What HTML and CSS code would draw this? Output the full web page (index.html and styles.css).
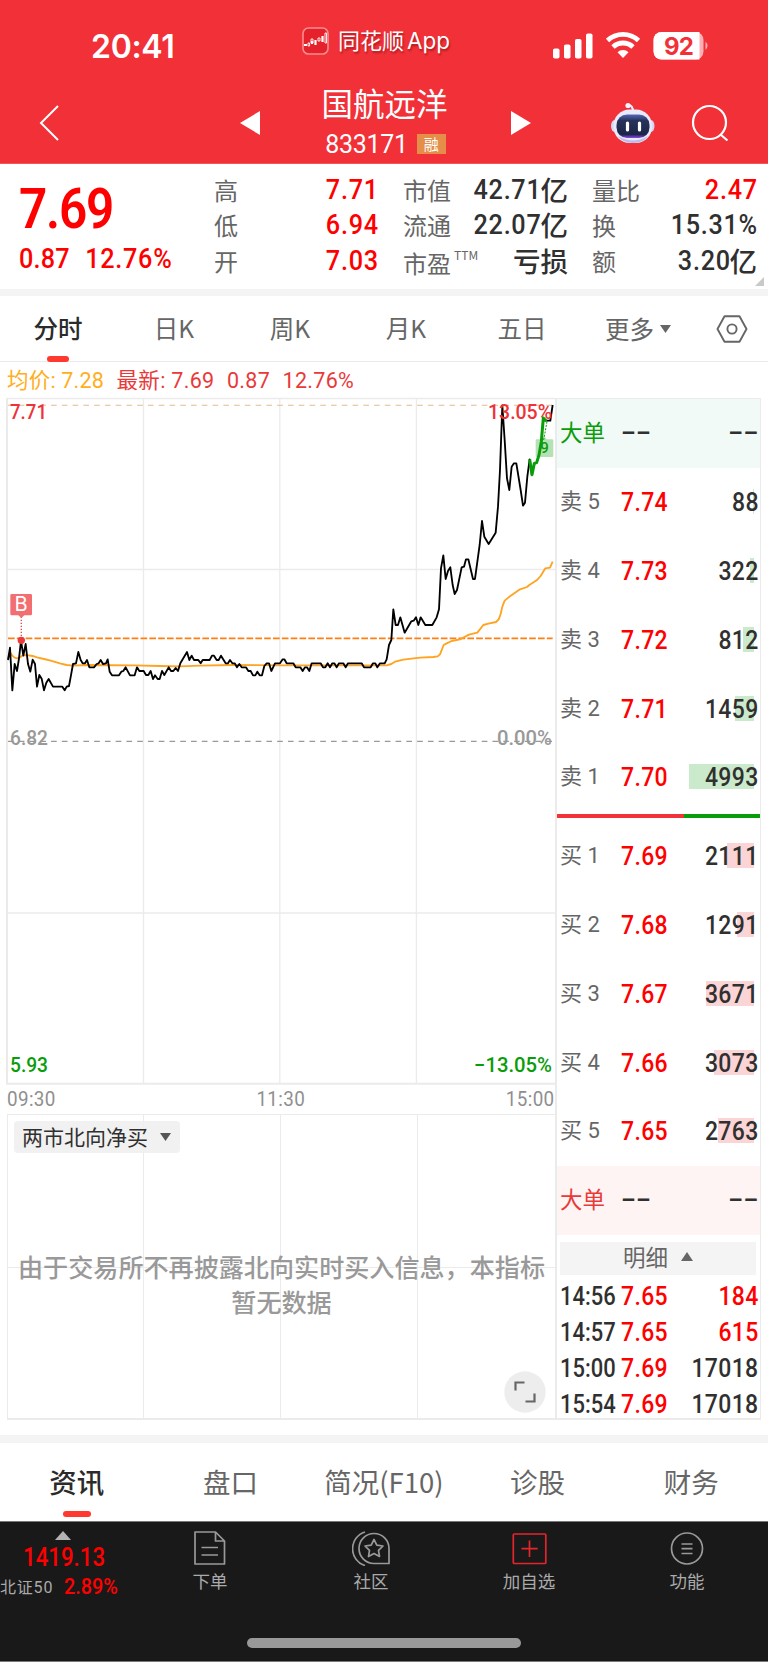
FILE: index.html
```html
<!DOCTYPE html>
<html lang="zh-CN">
<head>
<meta charset="utf-8">
<title>国航远洋 833171</title>
<link rel="stylesheet" href="styles.css">
</head>
<body>
<header class="header">
  <div class="status">
    <span class="clock">20:41</span>
    <div class="app">
      <svg width="27" height="28" viewBox="0 0 27 28"><rect x="1" y="1" width="25" height="26" rx="5.5" fill="#e5222b" stroke="#f78d90" stroke-width="1.6"/><path d="M2 18h3M10 14v3M13.5 13v5M20.5 9v6" stroke="#fff" stroke-width="2.2"/><path d="M6 17v2h1.600v-3H6zM9 12h2v4H9zM16 11h2v3h-2zM23 6h1.500v10H23z" fill="none" stroke="#fff" stroke-width=".9"/></svg>
      <span>同花顺<i>App</i></span>
    </div>
    <svg class="signals" width="158" height="30" viewBox="552 31 158 30">
      <g fill="#fff"><rect x="553" y="48.500" width="6.500" height="10" rx="1.800"/><rect x="564" y="44.500" width="6.500" height="14" rx="1.800"/><rect x="575" y="39" width="6.500" height="19.500" rx="1.800"/><rect x="586" y="33.500" width="6.500" height="25" rx="1.800"/></g>
      <g fill="none" stroke="#fff" stroke-width="4.800"><path d="M607.500 40.500a22.500 22.500 0 0 1 31 0"/><path d="M613 47a14.500 14.500 0 0 1 20 0"/></g><path d="M617.500 52.300a8 8 0 0 1 11 0L623 58z" fill="#fff"/>
      <rect x="653.500" y="32" width="50" height="27.500" rx="8" fill="#fbb0b3"/><path d="M661.500 32H699.500V59.500H661.500a8 8 0 0 1-8-8V40a8 8 0 0 1 8-8" fill="#fff"/><path d="M705.500 41.500q4 4.200 0 8.500z" fill="#fbb0b3"/>
      <text class="battery" x="678.500" y="54.500" text-anchor="middle">92</text>
    </svg>
  </div>
  <div class="nav">
    <svg class="back" width="22" height="38" viewBox="0 0 22 38"><path d="M20 2L3 19 20 36" fill="none" stroke="#fff" stroke-width="2"/></svg>
    <svg class="prev" width="20" height="24" viewBox="0 0 20 24"><path d="M20 0v24L0 12z" fill="#fff"/></svg>
    <div class="title"><h1>国航远洋</h1><p><span>833171</span><b>融</b></p></div>
    <svg class="next" width="20" height="24" viewBox="0 0 20 24"><path d="M0 0v24L20 12z" fill="#fff"/></svg>
    <svg class="robot" width="46" height="42" viewBox="610 102 46 42">
      <defs><linearGradient id="face" x1="0" y1="0" x2="0" y2="1"><stop offset="0" stop-color="#5668b8"/><stop offset=".25" stop-color="#28335c"/><stop offset=".85" stop-color="#1b2547"/><stop offset="1" stop-color="#9046f0"/></linearGradient></defs>
      <path d="M628 105q5 0 5 7" fill="none" stroke="#e8eafa" stroke-width="2.200"/><circle cx="628" cy="105.500" r="2.600" fill="#f3f4ff"/>
      <ellipse cx="614.500" cy="126" rx="3.500" ry="6" fill="#d5d7f4"/><ellipse cx="651" cy="126" rx="3.500" ry="6" fill="#d5d7f4"/>
      <rect x="613.500" y="109.500" width="38.500" height="33.500" rx="16" fill="#e9eafb"/><path d="M618 136q15 9 30 0-5 7-15 7t-15-7" fill="#b9bce9"/>
      <rect x="616.500" y="114.500" width="33" height="23.500" rx="10.500" fill="url(#face)"/><path d="M627.500 123v7M639.500 123v7" stroke="#fff" stroke-width="3.200" stroke-linecap="round"/>
    </svg>
    <svg class="search" width="40" height="40" viewBox="690 104 40 40"><ellipse cx="709.500" cy="123.500" rx="16.500" ry="16.500" fill="none" stroke="#fff" stroke-width="2.200"/><path d="M720.500 135.500L727.500 141.500" stroke="#fff" stroke-width="2.200"/></svg>
  </div>
</header>

<section class="quote">
  <div class="last"><strong class="n">7.69</strong><p class="n"><span>0.87</span><span class="pct">12.76%</span></p></div>
  <dl class="stats s1"><dt>高</dt><dd class="up"><span class="n">7.71</span></dd><dt>低</dt><dd class="up"><span class="n">6.94</span></dd><dt>开</dt><dd class="up"><span class="n">7.03</span></dd></dl>
  <dl class="stats s2"><dt>市值</dt><dd><span class="n">42.71</span><em>亿</em></dd><dt>流通</dt><dd><span class="n">22.07</span><em>亿</em></dd><dt class="pe">市盈<sup>TTM</sup></dt><dd><em>亏损</em></dd></dl>
  <dl class="stats s3"><dt>量比</dt><dd class="up"><span class="n">2.47</span></dd><dt>换</dt><dd><span class="n">15.31%</span></dd><dt>额</dt><dd><span class="n">3.20</span><em>亿</em></dd></dl>
  <svg class="corner" width="9" height="9" viewBox="0 0 9 9"><path d="M9 0v9H0z" fill="#c9c9c9"/></svg>
</section>

<nav class="periods">
  <span class="active">分时</span><span>日K</span><span>周K</span><span>月K</span><span>五日</span>
  <span class="more">更多<svg width="11" height="8" viewBox="0 0 11 8"><path d="M0 0h11L5.500 8z" fill="#666"/></svg></span>
  <span class="gear"><svg width="32" height="28" viewBox="0 0 32 28"><path d="M8.500 1.300h15L30.500 14l-7 12.700h-15L1.500 14z" fill="none" stroke="#666" stroke-width="1.900" stroke-linejoin="round"/><circle cx="16" cy="14" r="4.600" fill="none" stroke="#666" stroke-width="1.900"/></svg></span>
</nav>

<p class="legend"><span class="avg">均价: 7.28</span><span>最新: 7.69</span><span>0.87</span><span>12.76%</span></p>

<main class="board">
  <div class="charts">
    <svg class="trend" width="550" height="688" viewBox="6 397 550 688">
      <g fill="none" stroke="#ebebeb"><path d="M6 398.500H555M143.500 398V1084M279.800 398V1084M416.400 398V1084M7 569.500H555M7 913H555" stroke-width="1.300"/><path d="M7 398V1084M6 1083.700H555" stroke-width="2"/></g>
      <g transform="translate(0 390) scale(.33333)">
        <path d="M24 46H1662" stroke="#dfbd90" stroke-width="3.200" stroke-dasharray="17 15.300"/>
        <path d="M24 1054H1662" stroke="#999" stroke-width="3.600" stroke-dasharray="17 15.300"/>
        <path d="M24 745H1658" stroke="#ff7f11" stroke-width="4.800" stroke-dasharray="20 6.500"/>
        <path d="M64 680V745" stroke="#e84545" stroke-width="4" stroke-dasharray="4 5"/>
        <polyline fill="none" stroke="#ffa321" stroke-width="5.500" stroke-linejoin="round" points="24,808 30,787 37,797 44,803 51,805 58,803 70,795 85,796 98,798 111,802 132,807 152,812 180,820 200,825 220,827 260,825 400,826 480,828 540,829 600,827 700,825 840,826 1160,826 1174,822 1185,815 1210,809 1260,803 1300,801 1313,799 1320,793 1331,765 1340,760 1355,753 1380,748 1407,734 1432,728 1450,705 1465,701 1488,696 1496,688 1502,672 1507,650 1514,632 1526,622 1560,598 1581,591 1588,585 1610,571 1622,558 1636,535 1650,533 1658,515"/>
        <polyline fill="none" stroke="#000" stroke-width="5.500" stroke-linejoin="round" points="24,810 30,773 37,901 44,822 51,843 57,805 63,752 70,797 77,762 84,822 91,845 98,809 105,822 111,890 118,855 125,866 132,901 139,878 146,867 159,890 187,890 194,901 200,890 207,888 214,850 219,822 228,820 235,786 242,810 248,820 255,820 261,810 268,832 282,832 290,822 296,820 302,810 309,822 318,820 323,808 329,845 336,856 357,856 364,845 370,843 377,832 390,856 404,856 411,832 418,843 431,843 438,855 445,855 452,843 459,867 465,856 473,867 479,867 486,843 493,855 506,832 513,843 520,843 527,834 534,843 541,820 561,786 568,810 575,797 582,810 595,810 602,820 608,810 629,810 636,797 642,797 650,810 656,810 663,797 677,820 684,820 690,810 697,820 704,820 711,832 718,822 725,832 738,832 745,843 752,843 759,856 766,856 772,845 779,856 786,856 793,828 800,820 807,820 814,843 825,820 840,820 848,808 853,808 860,820 880,820 887,832 901,832 908,843 915,832 921,832 928,843 935,820 962,820 969,832 976,832 983,820 990,832 997,820 1003,820 1010,832 1017,820 1030,820 1037,832 1044,820 1085,820 1092,832 1112,832 1119,820 1126,820 1132,832 1140,820 1154,820 1160,808 1167,765 1174,750 1180,658 1187,705 1194,705 1201,682 1214,728 1234,694 1241,692 1248,682 1255,705 1262,682 1276,705 1297,705 1310,682 1317,658 1323,535 1330,496 1337,567 1344,543 1351,532 1358,585 1364,612 1371,600 1385,532 1392,530 1398,508 1405,508 1419,567 1425,567 1439,465 1446,393 1453,440 1466,462 1487,428 1494,350 1500,240 1507,46 1514,150 1521,265 1528,300 1535,230 1542,220 1549,220 1562,300 1569,347 1575,338 1582,260 1589,208 1596,256"/>
        <path d="M1637 92H1651L1658 45" fill="none" stroke="#000" stroke-width="5.500"/>
        <circle cx="64" cy="751" r="11" fill="#e83b3b"/>
        <path d="M35 612H92q4 0 4 4V672q0 4-4 4H73l-9 8-9-8H35q-4 0-4-4V616q0-4 4-4" fill="#f26e70"/>
        <path d="M1641 95L1631 150" stroke="#0a9d0a" stroke-width="3" stroke-dasharray="6 4"/>
        <path d="M1611 148H1624l8-10 8 10H1656q4 0 4 4V197q0 4-4 4H1611q-4 0-4-4V152q0-4 4-4" fill="#0a9d0a" fill-opacity=".3"/>
      </g>
      <text class="mark-b" x="21" y="610.500" text-anchor="middle">B</text>
      <text class="mark-9" x="544.500" y="453" text-anchor="middle">9</text>
      <text class="c-up" x="10" y="418.500" textLength="37" lengthAdjust="spacingAndGlyphs">7.71</text>
      <text class="c-up" x="488" y="418.500" textLength="64" lengthAdjust="spacingAndGlyphs">13.05%</text>
      <text class="c-flat" x="10" y="745" textLength="38" lengthAdjust="spacingAndGlyphs">6.82</text>
      <text class="c-flat" x="497" y="745" textLength="55" lengthAdjust="spacingAndGlyphs">0.00%</text>
      <text class="c-down" x="10" y="1072" textLength="38" lengthAdjust="spacingAndGlyphs">5.93</text>
      <text class="c-down" x="474" y="1072" textLength="78" lengthAdjust="spacingAndGlyphs">−13.05%</text>
      <polyline transform="translate(0 390) scale(.33333)" fill="none" stroke="#0a9d0a" stroke-width="9" stroke-linejoin="round" points="1589,208 1596,254 1603,220 1610,218 1617,195 1624,155 1630,84 1639,94"/>
    </svg>
    <div class="times"><span>09:30</span><span>11:30</span><span>15:00</span></div>
    <div class="north">
      <span class="picker">两市北向净买<svg width="11" height="8" viewBox="0 0 11 8"><path d="M0 0h11L5.500 8z" fill="#555"/></svg></span>
      <p>由于交易所不再披露北向实时买入信息，本指标<br>暂无数据</p>
      <svg class="expand" width="42" height="42" viewBox="0 0 42 42"><circle cx="21" cy="21" r="20.700" fill="#ededed"/><path d="M11.500 19.500V11.500H20.500M30.500 22.500V30.500H21.500" fill="none" stroke="#666" stroke-width="2.200"/></svg>
    </div>
  </div>

  <aside class="book">
    <div class="row big sell"><label>大单</label><b>––</b><i><s>––</s></i></div>
    <div class="row"><label>卖 5</label><b>7.74</b><i><u style="width:1px"></u><s>88</s></i></div>
    <div class="row"><label>卖 4</label><b>7.73</b><i><u style="width:4px"></u><s>322</s></i></div>
    <div class="row"><label>卖 3</label><b>7.72</b><i><u style="width:11px"></u><s>812</s></i></div>
    <div class="row"><label>卖 2</label><b>7.71</b><i><u style="width:19px"></u><s>1459</s></i></div>
    <div class="row"><label>卖 1</label><b>7.70</b><i><u style="width:65px"></u><s>4993</s></i></div>
    <div class="ratio"></div>
    <div class="row buy"><label>买 1</label><b>7.69</b><i><u style="width:27px"></u><s>2111</s></i></div>
    <div class="row buy"><label>买 2</label><b>7.68</b><i><u style="width:17px"></u><s>1291</s></i></div>
    <div class="row buy"><label>买 3</label><b>7.67</b><i><u style="width:48px"></u><s>3671</s></i></div>
    <div class="row buy"><label>买 4</label><b>7.66</b><i><u style="width:40px"></u><s>3073</s></i></div>
    <div class="row buy"><label>买 5</label><b>7.65</b><i><u style="width:36px"></u><s>2763</s></i></div>
    <div class="row big bid"><label>大单</label><b>––</b><i><s>––</s></i></div>
    <div class="detail">明细<svg width="12" height="9" viewBox="0 0 12 9"><path d="M0 9h12L6 0z" fill="#666"/></svg></div>
    <div class="tick"><span>14:56</span><b>7.65</b><i class="up"><s>184</s></i></div>
    <div class="tick"><span>14:57</span><b>7.65</b><i class="up"><s>615</s></i></div>
    <div class="tick"><span>15:00</span><b>7.69</b><i><s>17018</s></i></div>
    <div class="tick"><span>15:54</span><b>7.69</b><i><s>17018</s></i></div>
  </aside>
</main>

<nav class="sections"><span class="active">资讯</span><span>盘口</span><span>简况(F10)</span><span>诊股</span><span>财务</span></nav>

<footer class="footer">
  <div class="bar">
    <div class="index"><svg width="16" height="9" viewBox="0 0 16 9"><path d="M0 9h16L8 0z" fill="#b3b3b3"/></svg><strong>1419.13</strong><p><span>北证50</span><b>2.89%</b></p></div>
    <div class="item i1"><svg width="36" height="36" viewBox="192 1530 36 36" fill="none" stroke="#999" stroke-width="1.700" stroke-linejoin="round"><path d="M195 1532H215.500L224.500 1541V1564H195zM215.500 1532V1541H224.500M201.500 1547.500H218M201.500 1555H218"/></svg>下单</div>
    <div class="item i2"><svg width="38" height="36" viewBox="351 1530 38 36" fill="none" stroke="#999" stroke-width="1.700" stroke-linejoin="round"><path d="M373 1563.500a15 15 0 1 1 15-15V1563.500zM364 1532a17.500 17.500 0 0 0 0 33.500"/><path d="M373 1539.500l2.800 5.600 6.200.9-4.500 4.400 1 6.100-5.500-2.900-5.500 2.900 1-6.100-4.500-4.400 6.200-.9z"/></svg>社区</div>
    <div class="item i3"><svg width="36" height="36" viewBox="512 1530 36 36" fill="none" stroke="#e3262d" stroke-width="1.700"><rect x="514.300" y="1534" width="32.500" height="29.500" rx="1"/><path d="M530.500 1540.500V1557M522.500 1548.700H538.700"/></svg>加自选</div>
    <div class="item i4"><svg width="36" height="36" viewBox="669.500 1530 36 36" fill="none" stroke="#999" stroke-width="1.700"><circle cx="687.500" cy="1548.500" r="15.500"/><path d="M682 1544H693M682 1548.700H693M682 1553.500H693"/></svg>功能</div>
  </div>
  <div class="home"></div>
</footer>
</body>
</html>
```

FILE: styles.css
```css
* { box-sizing: border-box; }
body, h1, p, dl, dd { margin: 0; }
body { width: 768px; background: #fff; color: #303030; font-family: Roboto, "Noto Sans CJK SC", sans-serif; }
i, em { font-style: normal; }
svg { display: block; flex: none; }
svg text { white-space: pre; }
.up { color: #f00; }
/* narrow numerals */
.n { display: inline-block; transform: scaleX(.9); transform-origin: right center; letter-spacing: .8px; margin-right: -.8px; }

.header { height: 164px; background: #f23038; color: #fff; border-bottom: 1px solid #f4565b; }
.status { display: flex; height: 84px; }
.clock { width: 211px; padding: 28px 0 0 91px; font: 600 32px/38px Inter, sans-serif; letter-spacing: -.3px; }
.app { display: flex; gap: 9px; width: 250px; padding: 27px 0 0 91px; font-size: 22px; line-height: 28px; text-shadow: 1px 2px 2px rgba(90, 0, 0, .45); white-space: nowrap; }
.app i { margin-left: 3px; font-family: Inter, sans-serif; font-size: 22.500px; }
.signals { margin: 31px 0 0 91px; }
.battery { font: 700 24px Inter, sans-serif; fill: #f23038; letter-spacing: -.8px; }
.nav { display: flex; height: 79px; }
.back { margin: 20px 0 0 38px; }
.prev { margin: 27px 0 0 180px; }
.title { width: 251px; padding-right: 2px; text-align: center; }
.title h1 { height: 42px; font: 400 31.500px/37px "Noto Sans CJK SC", sans-serif; }
.title p { display: flex; justify-content: center; align-items: center; gap: 9px; height: 36px; padding-left: 2px; font-size: 25px; letter-spacing: -.3px; }
.title b { width: 29px; height: 20px; background: #e58e49; font: 400 15px/19px "Noto Sans CJK SC", sans-serif; letter-spacing: 0; }
.next { margin: 27px 0 0; }
.robot { margin: 18px 0 0 79px; }
.search { margin: 19px 0 0 34px; }

.quote { position: relative; display: flex; height: 132px; padding-top: 9px; border-bottom: 7px solid #f4f4f4; }
.last { width: 214px; padding-left: 18px; color: #f00; font-weight: 500; }
.last .n { transform-origin: left center; }
.last strong { display: block; height: 68px; padding-left: 1px; font-size: 55px; font-weight: 600; line-height: 72px; letter-spacing: -1.300px; }
.last p { display: flex; gap: 17px; font-size: 28px; line-height: 36px; letter-spacing: .3px; padding-left: 1px; }
.last .pct { letter-spacing: .8px; }
.stats { display: grid; grid-template-columns: 50px 1fr; grid-auto-rows: 35.300px; }
.stats dt { font: 400 24px/34px "Noto Sans CJK SC", sans-serif; color: #666; white-space: nowrap; }
.stats dd { display: flex; justify-content: flex-end; height: 34px; font-size: 28px; font-weight: 500; line-height: 34px; white-space: nowrap; }
.stats em { font: 500 27.500px/33px "Noto Sans CJK SC", sans-serif; }
.s1 { width: 164px; }
.s2 { width: 165px; margin-left: 25px; }
.s3 { width: 165px; margin-left: 24px; }
.stats .pe { padding-top: 2px; height: 34px; }
.pe sup { font-size: 12px; line-height: 12px; vertical-align: 13px; margin-left: 3px; }
.corner { position: absolute; right: 4px; bottom: 3px; }

.periods { display: flex; height: 66px; border-bottom: 1px solid #eaeaea; font: 400 24.500px/64px "Noto Sans CJK SC", sans-serif; color: #666; }
.periods span { width: 116px; text-align: center; }
.periods .active { position: relative; font-weight: 500; color: #2b2b2b; }
.periods .active::after { content: ""; position: absolute; left: 47px; bottom: -1px; width: 22px; height: 6px; border-radius: 3px; background: #ff3830; }
.periods .more { display: flex; align-items: center; width: 132px; padding-left: 25px; gap: 6px; }
.periods .gear { display: flex; align-items: center; width: 56px; padding-left: 4px; }

.legend { display: flex; gap: 12.500px; height: 36px; padding-left: 7px; font-size: 21.500px; line-height: 37px; letter-spacing: .3px; color: #e93a3a; white-space: nowrap; }
.legend .avg { letter-spacing: .2px; color: #ffae20; }

.board { display: flex; width: 768px; height: 1037px; }
.charts { width: 556px; }
.trend { margin: -1px 0 0 6px; }
.trend text { font-size: 20.700px; font-weight: 500; }
.trend .mark-b { fill: #fff; font: 400 20px Inter, sans-serif; }
.trend .mark-9 { fill: #0a9d0a; font-size: 15px; }
.c-up { fill: #ee3338; }
.c-flat { fill: #999; }
.c-down { fill: #0a9d0a; }
.times { display: flex; justify-content: space-between; height: 29px; padding: 0 1px 0 7px; font-size: 20.700px; line-height: 29px; letter-spacing: .4px; color: #8f8f8f; }
.times span { transform: scaleX(.91); }
.times span:first-child { transform-origin: left center; }
.times span:last-child { transform-origin: right center; }
.north { position: relative; height: 306px; width: 549px; margin-left: 7px; border: 1px solid #ebebeb; border-bottom-width: 2px; background: linear-gradient(#ebebeb, #ebebeb) 135px 0/1px 100% no-repeat, linear-gradient(#ebebeb, #ebebeb) 272px 0/1px 100% no-repeat, linear-gradient(#ebebeb, #ebebeb) 409px 0/1px 100% no-repeat, linear-gradient(#ebebeb, #ebebeb) 0 152px/100% 1px no-repeat; }
.picker { display: flex; align-items: center; gap: 12px; width: 166px; height: 32px; margin: 6px 0 0 6px; padding: 0 0 1px 8px; border-radius: 4px; background: rgba(240, 240, 240, .9); color: #303030; font: 400 21px/29px "Noto Sans CJK SC", sans-serif; white-space: nowrap; }
.north p { margin-top: 96px; text-align: center; font: 500 25.100px/35px "Noto Sans CJK SC", sans-serif; color: #999; white-space: nowrap; }
.expand { position: absolute; right: 9px; bottom: 5px; }

.book { width: 206px; height: 1022px; border: solid #ebebeb; border-width: 1px 1px 2px 2px; margin-left: -1px; }
.row { display: flex; align-items: center; height: 68.800px; padding: 0 2px 0 3px; }
.row label { width: 61px; font: 400 22px/30px Roboto, "Noto Sans CJK SC", sans-serif; color: #666; white-space: pre; }
.row b, .row i, .tick { font-size: 25.500px; font-weight: 500; line-height: 30px; }
.row b, .tick b { width: 60px; color: #f00; font-weight: 500; letter-spacing: .4px; transform: scaleX(.9); transform-origin: left center; }
.row i, .tick i { position: relative; flex: 1; text-align: right; z-index: 0; }
.row s, .tick s { display: inline-block; text-decoration: none; letter-spacing: .4px; margin-right: -.4px; transform: scaleX(.9); transform-origin: right center; }
.row u { position: absolute; z-index: -1; right: 4px; top: 2px; height: 25px; background: #cbeacb; }
.row.buy u { background: #fbd5d6; }
.row.big label { font-size: 22.500px; }
.row.big b, .row.big i { color: #303030; }
.row.sell { background: #f2faf7; }
.row.sell label { color: #0a9d0a; }
.row.bid { background: #fff4f4; }
.row.bid label { color: #e93a3a; }
.ratio { height: 4px; margin: 2px 0 4px; background: linear-gradient(90deg, #f03338 62.500%, #0a9d0a 62.500%); }
.detail { display: flex; align-items: center; justify-content: center; gap: 13px; height: 33px; margin: 7px 4px 3px 3px; padding-bottom: 3px; background: #f4f4f4; color: #666; font: 400 22.500px/29px "Noto Sans CJK SC", sans-serif; }
.tick { display: flex; align-items: center; height: 36px; padding: 0 2px 0 3px; }
.tick span { width: 61px; transform: scaleX(.86); transform-origin: left center; }

.sections { display: flex; height: 86px; border-top: 8px solid #f4f4f4; font: 400 27.500px/76px "Noto Sans CJK SC", sans-serif; color: #666; }
.sections span { position: relative; flex: 1; text-align: center; }
.sections .active { font-weight: 500; color: #2b2b2b; }
.sections .active::after { content: ""; position: absolute; left: 63px; bottom: 4px; width: 28px; height: 6px; border-radius: 3px; background: #ff3830; }

.footer { height: 141px; border-top: 1px solid #777; border-bottom: 1px solid #777; background: #191919; color: #aaa; }
.bar { display: flex; height: 116px; }
.index { width: 126px; padding-top: 9px; }
.index svg { margin-left: 55px; }
.index strong { display: block; margin: 3px 0 0 23px; color: #f00; font-size: 25px; font-weight: 500; line-height: 30px; transform: scaleX(.89); transform-origin: left center; }
.index p { display: flex; gap: 11px; margin-top: -1px; line-height: 30px; white-space: nowrap; }
.index p span { width: 53px; font: 400 16px/31px Roboto, "Noto Sans CJK SC", sans-serif; letter-spacing: .8px; }
.index p b { color: #f00; font-size: 22px; font-weight: 500; transform: scaleX(.9); transform-origin: left center; }
.item { display: flex; flex-direction: column; align-items: center; padding-top: 8px; font: 400 17.500px/30px "Noto Sans CJK SC", sans-serif; }
.i1 { width: 168px; }
.i2 { width: 154px; }
.i3 { width: 162px; }
.i4 { width: 154px; }
.home { width: 274px; height: 10px; margin-left: 247px; border-radius: 5px; background: #999; }
```
